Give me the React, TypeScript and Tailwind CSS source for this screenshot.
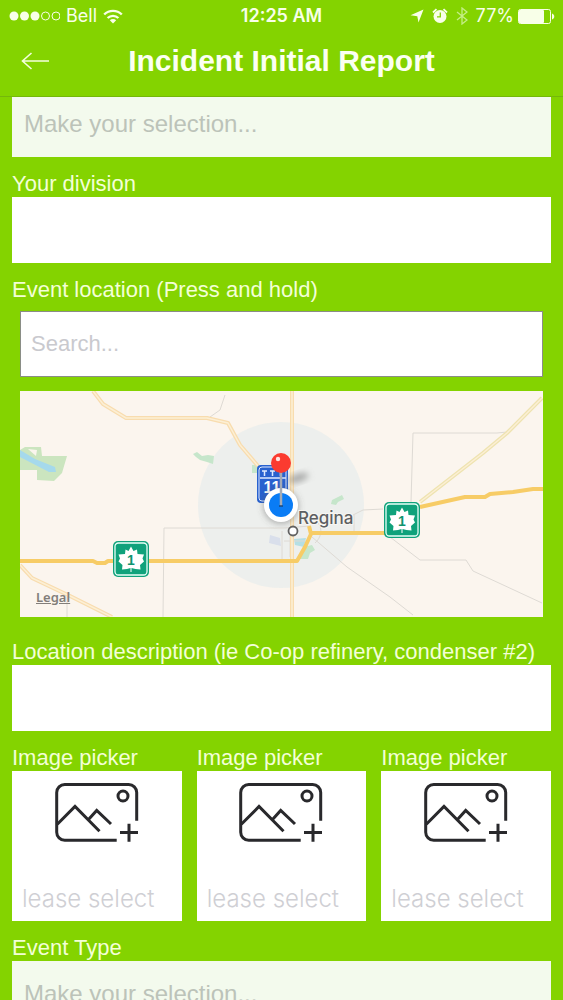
import type { ReactNode } from "react";

interface FieldProps {
  id: string;
  label: string;
  children: ReactNode;
}

const pickers = ["picker-1", "picker-2", "picker-3"];

const inputClass = "block h-[66px] w-full bg-white px-3 text-[22px] text-gray-700 outline-none";

export default function App() {
  return (
    <div className="flex h-dvh flex-col overflow-hidden bg-[#84d300] font-['Liberation_Sans',Arial,sans-serif]">
      <StatusBar />
      <header className="grid h-[65px] shrink-0 grid-cols-[72px_1fr_72px] items-center border-b border-[#74b80a] pb-1.5">
        <button type="button" aria-label="Back" className="flex h-12 items-center pl-[21px]">
          <svg width="29" height="18" viewBox="0 0 29 18" fill="none" stroke="#f4ffdc" strokeWidth="1.6">
            <path d="M28 9H1.5M10.5 1 1.5 9l9 8" />
          </svg>
        </button>
        <h1 className="text-center text-[30px] leading-9 font-bold whitespace-nowrap text-[#fbfff2]">
          Incident Initial Report
        </h1>
      </header>

      <main className="min-h-0 flex-1 overflow-y-auto [scrollbar-width:none]">
        <form className="-mt-1.5 flex flex-col gap-3.5 px-3">
          <SelectionBox id="incident" ariaLabel="Incident" />
          <Field id="division" label="Your division">
            <input id="division" type="text" className={inputClass} />
          </Field>
          <Field id="location" label="Event location (Press and hold)">
            <div className="flex flex-col gap-3.5 p-2">
              <input
                id="location"
                type="search"
                placeholder="Search..."
                className="block h-[66px] w-full appearance-none border border-[#8a8d86] bg-white px-2.5 text-[22px] text-gray-700 outline-none placeholder:text-[#c9c9ce]"
              />
              <LocationMap />
            </div>
          </Field>
          <Field id="description" label="Location description (ie Co-op refinery, condenser #2)">
            <input id="description" type="text" className={inputClass} />
          </Field>
          <div className="grid grid-cols-3 gap-[15px]">
            {pickers.map((id) => (
              <Field key={id} id={id} label="Image picker">
                <ImagePicker id={id} />
              </Field>
            ))}
          </div>
          <Field id="event-type" label="Event Type">
            <SelectionBox id="event-type" />
          </Field>
        </form>
      </main>
    </div>
  );
}

const Field = ({ id, label, children }: FieldProps) => {
  return (
    <div className="flex min-w-0 flex-col">
      <label htmlFor={id} className="text-[22px] leading-[26px] whitespace-nowrap text-[#f3ffd6]">
        {label}
      </label>
      {children}
    </div>
  );
};

const SelectionBox = ({ id, ariaLabel }: { id: string; ariaLabel?: string }) => {
  return (
    <select
      id={id}
      aria-label={ariaLabel}
      className="block h-[66px] w-full shrink-0 appearance-none bg-[#f3faed] px-3 text-[24px] text-[#bcc3b9] outline-none"
    >
      <option>Make your selection...</option>
    </select>
  );
};

const ImagePicker = ({ id }: { id: string }) => {
  return (
    <button id={id} type="button" className="flex h-[150px] w-full flex-col justify-between bg-white pt-3 pb-1.5">
      <svg
        width="84"
        height="60"
        viewBox="0 0 84 60"
        fill="none"
        stroke="#29292c"
        strokeWidth="3"
        className="self-center"
      >
        <path d="M81.700 37.700V9.500a8 8 0 0 0-8-8H9.700a8 8 0 0 0-8 8v39.700a8 8 0 0 0 8 8h52" />
        <circle cx="68" cy="13" r="5" />
        <path d="M2.300 41.300 20 23.500l24.500 24.800M33.500 36.500l8.200-9L56 41" />
        <path d="M65 49.500h18M74 40.800v18" />
      </svg>
      <span className="pl-2.5 text-left font-[Inter,sans-serif] text-[24px] leading-8 font-light text-[#cfcfd4]">
        lease select
      </span>
    </button>
  );
};

const StatusBar = () => {
  return (
    <div className="grid h-8 shrink-0 grid-cols-[1fr_auto_1fr] items-center px-2 font-[Inter,sans-serif] text-[18px] leading-6 text-[#f8ffe8]">
      <div className="flex items-center gap-1.5">
        <svg width="52" height="10" viewBox="0 0 52 10" fill="currentColor">
          <circle cx="6" cy="5" r="4.500" />
          <circle cx="16.500" cy="5" r="4.500" />
          <circle cx="27" cy="5" r="4.500" />
          <g fill="none" stroke="currentColor" strokeWidth="1">
            <circle cx="37.500" cy="5" r="4" />
            <circle cx="48" cy="5" r="4" />
          </g>
        </svg>
        <span>Bell</span>
        <svg width="20" height="15" viewBox="0 0 20 15" fill="none" stroke="currentColor" strokeWidth="2.400">
          <path d="M1.200 5.500a12.500 12.500 0 0 1 17.600 0M4.600 9a7.800 7.800 0 0 1 10.800 0" />
          <path d="m10 14.500-3.200-3.300a4.600 4.600 0 0 1 6.400 0z" fill="currentColor" stroke="none" />
        </svg>
      </div>
      <span className="font-semibold">12:25 AM</span>
      <div className="flex items-center justify-end gap-2">
        <svg width="14" height="14" viewBox="0 0 14 14" fill="currentColor">
          <path d="M13.500.5 8.500 13.500 7.300 7.200.5 6.300z" />
        </svg>
        <svg width="16" height="16" viewBox="0 0 16 16">
          <circle cx="8" cy="8.500" r="6.500" fill="currentColor" />
          <path d="M1 4.500 4.500 1.200M15 4.500l-3.500-3.300" stroke="currentColor" strokeWidth="1.800" />
          <path d="M8.300 4.500v4.300H5" fill="none" stroke="#84d300" strokeWidth="1.300" />
        </svg>
        <svg width="12" height="18" viewBox="0 0 12 18" fill="none" stroke="#c5ee86" strokeWidth="1.300">
          <path d="m1 5 10 8-5 4V1l5 4-10 8" />
        </svg>
        <div className="flex items-center gap-1">
          <span>77%</span>
          <svg width="37" height="15" viewBox="0 0 37 15" fill="currentColor">
            <rect x=".5" y=".5" width="32" height="14" rx="2" fill="none" stroke="currentColor" />
            <rect x="1" y="1" width="25" height="13" rx="1" />
            <path d="M34 4.500c3 .8 3 5.200 0 6z" />
          </svg>
        </div>
      </div>
    </div>
  );
};

const HighwayShield = ({ x, y }: { x: number; y: number }) => {
  return (
    <g transform={`translate(${x} ${y})`}>
      <rect width="36" height="36" rx="5" fill="#10a27b" />
      <rect x="2" y="2" width="32" height="32" rx="3.500" fill="#10a27b" stroke="#e6fff7" strokeWidth="1.300" />
      <path
        d="M18 5.500 20.500 10l3.500-1.500.5 4.500 6.500.5-1.500 4 1.500 3-4 3.500.5 4.500-5-.500L18.500 27v4h-1v-4L14 28l-5 .500.500-4.500-4-3.500 1.500-3-1.500-4 6.500-.5.5-4.500 3 1.500z"
        fill="#fff"
      />
      <text
        x="18"
        y="24"
        textAnchor="middle"
        fill="#10936f"
        className="font-['Liberation_Sans',sans-serif] text-[14px] font-bold"
      >
        1
      </text>
    </g>
  );
};

const LocationMap = () => {
  return (
    <div className="relative">
      <svg viewBox="0 0 523 226" className="block h-auto w-full bg-[#fbf5ee]" role="img" aria-label="Map of Regina">
        <defs>
          <filter id="soft" x="-50%" y="-50%" width="200%" height="200%">
            <feGaussianBlur stdDeviation="3" />
          </filter>
        </defs>

        {/* parks and water */}
        <path d="M0 59l5-3h16l1 9h25l-5 17-8 8-17-1V79H0z" fill="#cbe5bf" />
        <path d="M0 59l15 9 20 8 1 5h-7L0 66z" fill="#a5d9ec" />
        <path d="M8 58l9 1-1 6z" fill="#fbf5ee" />

        <circle cx="261" cy="114" r="83" fill="#ebeeec" fillOpacity=".9" />
        <g fill="#c6e6cb">
          <path d="M173 63l4-2 5 4 6-1 6 1-1 8-6-2-7-2-4-3z" />
          <path d="M312 109l10-5 2 4-6 3-2 3-5-1z" />
          <path d="M232 74h7v8h-7z" />
          <path d="M283 156l9-2 3 5-5 3-2 6h-9z" />
        </g>
        <path d="M274 148l12-1-2 9-9-2z" fill="#b5dfe4" />
        <path d="M250 144l10 3 1 8-12-3z" fill="#d9dfeb" />

        {/* minor roads */}
        <g fill="none" stroke="#dedad4" strokeWidth="1">
          <path d="M143 226l1-89h120l26-2M205 4l-5 15-10 7M47 206v20" />
          <path d="M391 111l2-69h84l10-1M370 146l30 23h46l7 11 69 32" />
          <path d="M292 146l35 30 43 30 23 18M333 124l10-5 20-1" />
          <path d="M262 140v28M270 144v22M298 132c5 6 3 15-3 20M264 150h22M334 124v16" />
        </g>

        {/* secondary highways */}
        <g fill="none" stroke="#f8dcae" strokeWidth="4" strokeLinejoin="round">
          <path d="M73 0l10 13 23 14h81l21 5 12 22 18 21M272 0v226M0 174l12 13 38 18 42 21" />
          <path d="M400 111l63-49 24-20 35-35" stroke="#eee3b0" />
        </g>
        <g fill="none" stroke="#fcefd5" strokeWidth="1.500" strokeLinejoin="round">
          <path d="M73 0l10 13 23 14h81l21 5 12 22 18 21M272 0v226M0 174l12 13 38 18 42 21" />
          <path d="M400 111l63-49 24-20 35-35" />
        </g>

        {/* trans-canada */}
        <g fill="none" stroke="#f7cc66" strokeWidth="4" strokeLinejoin="round">
          <path d="M0 170h73l4 2h8l3-2h189l8-14 6-13-2-8M291 142h75" />
          <path d="M400 116l45-10h20l5-3 23-2 20-3h10" />
        </g>

        <HighwayShield x={93} y={150} />
        <HighwayShield x={364} y={111} />

        {/* highway 11 */}
        <rect x="237" y="74" width="31" height="38" rx="4" fill="#2861cf" />
        <rect x="239" y="76" width="27" height="34" rx="3" fill="none" stroke="#dfeaff" />
        <path d="M240 87h26" stroke="#dfeaff" strokeWidth="1.500" />
        <path d="M242 80h5M244.500 80v5M250 80h5M252.500 80v5M258 80h5M260.500 80v5" stroke="#dfeaff" strokeWidth="1.500" />
        <text
          x="252"
          y="102"
          textAnchor="middle"
          fill="#fff"
          className="font-['Liberation_Sans',sans-serif] text-[16px] font-bold"
        >
          11
        </text>

        {/* current position and dropped pin */}
        <ellipse cx="278" cy="87" rx="11" ry="4" fill="#777" fillOpacity=".6" transform="rotate(-18 278 87)" filter="url(#soft)" />
        <circle cx="261" cy="115" r="18" fill="#555" fillOpacity=".4" filter="url(#soft)" />
        <circle cx="261" cy="114" r="17" fill="#fff" />
        <circle cx="261" cy="114" r="12" fill="#0a7cf5" />
        <path d="M261 80v35" stroke="#a5abb5" strokeWidth="2.500" />
        <path d="M259 115h4" stroke="#174880" strokeWidth="1.500" />
        <circle cx="261" cy="72" r="10" fill="#fb3b30" />
        <circle cx="258" cy="68" r="2.200" fill="#ffe5e2" />

        <circle cx="273" cy="140" r="4.500" fill="#fff" stroke="#626262" strokeWidth="1.800" />
        <text
          x="278"
          y="133"
          fill="#5d5f62"
          stroke="#f8f6f2"
          strokeWidth="2"
          paintOrder="stroke"
          className="font-[Inter,sans-serif] text-[17px] font-medium"
        >
          Regina
        </text>
      </svg>
      <a
        href="#legal"
        className="absolute bottom-3 left-4 font-['Noto_Sans',sans-serif] text-[13px] leading-4 font-semibold text-[#827e7a] underline"
      >
        Legal
      </a>
    </div>
  );
};
